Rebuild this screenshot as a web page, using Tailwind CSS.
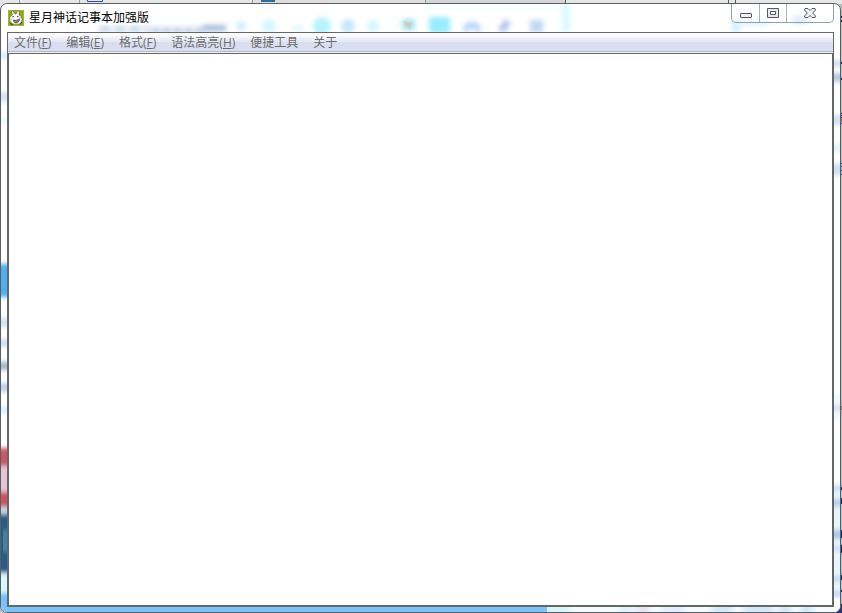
<!DOCTYPE html>
<html lang="zh-CN">
<head>
    <meta charset="UTF-8">
    <meta name="viewport" content="width=device-width, initial-scale=1.0">
    <title>星月神话记事本加强版</title>
    <script src="https://cdn.jsdelivr.net/npm/@tailwindcss/browser@4"></script>
</head>
<body class="relative h-screen overflow-hidden bg-[#c4c4c4] pt-[3px] pr-px font-['Open_Sans','Noto_Sans_CJK_SC',sans-serif] text-[12px] leading-4">

    <!-- desktop behind the window -->
    <svg class="absolute inset-x-0 top-0 h-3 w-full" aria-hidden="true">
        <rect width="100%" height="12" fill="#e6e6e6"/>
        <rect x="254" width="171" height="12" fill="#dedede"/>
        <rect x="425" width="140" height="12" fill="#d5d5d5"/>
        <path d="M19.5 0v3M79.5 0v3M252.500 0v3M425.500 0v3" stroke="#999"/>
        <path d="M565.500 0v3M728.500 0v3M735.500 0v3" stroke="#555"/>
        <path d="M87.500 0v1.500h15V0" fill="none" stroke="#2f4f94"/>
        <rect x="261" width="14" height="2" fill="#2c7297"/>
    </svg>
    <svg class="absolute inset-y-0 right-0 h-full w-2" aria-hidden="true">
        <rect y="4" width="8" height="100%" fill="#bdbdbd"/>
        <path d="M7.500 16v2M7.500 20v2M7.500 62v2M7.500 78v2M7.500 113v1M7.500 115v1M7.500 117v1M7.500 123v1M7.500 163v1M7.500 166v1M7.500 170v1M7.500 174v1M7.500 487v3M7.500 498v6M7.500 530v8M7.500 545v8M7.500 575v5M7.500 590v2M7.500 604v9" stroke="#20206a"/>
        <path d="M7.500 118v4M7.500 406v4" stroke="#a8763c"/>
        <path d="M0 613l8-8v8z" fill="#303078"/>
    </svg>

    <div class="relative flex h-full flex-col overflow-hidden rounded-[7px] border border-[#5c5f60] bg-white px-[6px] pb-[5px]">

        <!-- blurred glass: title strip -->
        <svg class="absolute inset-x-0 top-0 h-7 w-full" aria-hidden="true">
            <defs>
                <filter id="soft" x="-20" y="-20" width="900" height="80" filterUnits="userSpaceOnUse"><feGaussianBlur stdDeviation="2.500"/></filter>
            </defs>
            <g filter="url(#soft)">
                <path d="M98 25h50" stroke="#bfd2e8" stroke-width="5" stroke-dasharray="12 3"/>
                <path d="M150 26h52" stroke="#b6cae4" stroke-width="5" stroke-dasharray="9 2"/>
                <path d="M202 24h23" stroke="#a3bad9" stroke-width="6"/>
                <rect x="425" y="3" width="143" height="2" fill="#ecfcff"/>
                <rect x="561" y="0" width="8" height="28" fill="#dcf9ff"/>
                <circle cx="240" cy="22" r="5" fill="#d3effc"/>
                <circle cx="268" cy="22" r="7" fill="#d4f7ff"/>
                <ellipse cx="297" cy="24" rx="7" ry="3" fill="#def8ff"/>
                <circle cx="321" cy="22" r="9" fill="#b3f5ff"/>
                <circle cx="347" cy="22" r="7" fill="#c5e7fb"/>
                <circle cx="372" cy="22" r="6" fill="#d6f4ff"/>
                <rect x="401" y="15" width="13" height="11" fill="#a8e5f2"/>
                <rect x="428" y="13" width="21" height="16" rx="3" fill="#97edff"/>
                <path d="M465 27a6 6 0 0 1 12 0" fill="none" stroke="#b9d6fa" stroke-width="7"/>
                <path d="M500 27l7-10" stroke="#b0c2ee" stroke-width="7"/>
                <rect x="529" y="16" width="13" height="12" fill="#bfd8f6"/>
                <rect x="731" y="16" width="8" height="12" fill="#d1efff"/>
                <ellipse cx="799" cy="16" rx="9" ry="4" fill="#cfe0f2"/>
                <ellipse cx="752" cy="18" rx="18" ry="4" fill="#e3f3ff"/>
            </g>
            <path d="M402 17l9 2-2 7z" fill="#e6b9a6" opacity=".6"/>
            <path d="M403 19l4 1-2 3z" fill="#b5dca0" opacity=".6"/>
        </svg>

        <!-- left, right and bottom edges -->
        <svg class="absolute inset-y-0 left-0 h-full w-[7px]" aria-hidden="true">
            <defs>
                <filter id="edge" x="-5" y="-8" width="20" height="660" filterUnits="userSpaceOnUse"><feGaussianBlur stdDeviation="0 2"/></filter>
            </defs>
            <g filter="url(#edge)">
                <rect y="48" width="7" height="7" fill="#d9f0fb"/>
                <rect y="88" width="7" height="10" fill="#d6e3f5"/>
                <rect y="116" width="7" height="3" fill="#d9f5ff"/>
                <rect y="260" width="7" height="33" fill="#51adef"/>
                <rect y="314" width="7" height="9" fill="#d3e2f7"/>
                <rect y="335" width="7" height="8" fill="#cfdff5"/>
                <rect y="358" width="7" height="8" fill="#a6b4c9"/>
                <rect y="379" width="7" height="9" fill="#bfd0e9"/>
                <rect y="403" width="7" height="6" fill="#d6efff"/>
                <rect y="444" width="7" height="18" fill="#cb5768"/>
                <rect y="462" width="7" height="26" fill="#e5c4d6"/>
                <rect y="488" width="7" height="15" fill="#cb5264"/>
                <rect y="503" width="7" height="7" fill="#c8d8e8"/>
                <rect y="510" width="7" height="59" fill="#285d8a"/>
                <rect y="526" x="2" width="5" height="22" fill="#4280a6"/>
                <rect y="569" width="7" height="20" fill="#d8f8ff"/>
                <rect y="589" width="7" height="30" fill="#74c2fc"/>
            </g>
        </svg>
        <svg class="absolute inset-y-0 right-0 h-full w-[7px]" aria-hidden="true">
            <g filter="url(#edge)">
                <rect y="56" width="7" height="7" fill="#cfe2f3"/>
                <rect y="69" width="7" height="9" fill="#b4cbe5"/>
                <rect y="111" width="7" height="10" fill="#cde4fa"/>
                <rect y="140" width="7" height="8" fill="#def5ff"/>
                <rect y="160" width="7" height="11" fill="#c9e0fb"/>
                <rect y="390" width="7" height="26" fill="#f0faff"/>
                <rect y="401" width="7" height="6" fill="#cde3f7"/>
                <rect y="480" width="7" height="110" fill="#e6f6ff"/>
                <rect y="482" width="7" height="5" fill="#bfdcf8"/>
                <rect y="495" width="7" height="8" fill="#b3d2f2"/>
                <rect y="526" width="7" height="9" fill="#a2c9ee"/>
                <rect y="542" width="7" height="5" fill="#c4def8"/>
                <rect y="572" width="7" height="6" fill="#bfdcf8"/>
                <rect y="587" width="7" height="6" fill="#bfdcf8"/>
            </g>
        </svg>
        <svg class="absolute inset-x-0 bottom-0 h-[6px] w-full" aria-hidden="true">
            <defs>
                <filter id="base" x="-10" y="-2" width="1000" height="12" filterUnits="userSpaceOnUse"><feGaussianBlur stdDeviation="3 0"/></filter>
            </defs>
            <rect width="100%" height="6" fill="#f3fbff"/>
            <g filter="url(#base)">
                <rect x="540" width="28" height="6" fill="#d7f4ff"/>
                <rect x="618" width="14" height="6" fill="#e0f0ff"/>
                <rect x="636" width="12" height="6" fill="#e7e3f5"/>
                <rect x="660" width="24" height="6" fill="#e0efff"/>
                <rect x="711" width="20" height="6" fill="#d2e9fc"/>
                <rect x="742" width="30" height="6" fill="#d2e9fc"/>
                <rect x="778" width="12" height="6" fill="#d2e9fc"/>
                <rect x="800" width="12" height="6" fill="#d2e9fc"/>
            </g>
            <rect width="546" height="6" fill="#79c4ff"/>
        </svg>

        <header class="relative flex h-7 shrink-0 items-start justify-between">
            <div class="flex items-center gap-[5px] pt-[6px] pl-px">
                <svg class="size-4" viewBox="0 0 16 16" aria-hidden="true">
                    <rect width="16" height="16" fill="#8fa51d"/>
                    <path d="M.5.500h15v15H.5z" fill="none" stroke="#a3b62b"/>
                    <path d="M4.500 5L3.500 1.500 5 .8 7 4h1L9.500.8l2 .7L11 5c2 1 3 2.500 3 4.500 0 3-2 5-5.500 5S2 12.500 1.700 10 2.500 6 4.500 5z" fill="#fff" stroke="#5d6536" stroke-width=".6"/>
                    <path d="M5 2l.8 2M10.400 2l-.6 2" stroke="#c9c4c4" stroke-width=".8"/>
                    <path d="M4.500 6.700h1.500M9 6.700h1.500" stroke="#302c2c"/>
                    <path d="M5.500 10c2 .8 4.500.3 6-1.300 0 2.500-1.200 4.300-3.300 4.300-1.500 0-2.700-1.300-2.700-3z" fill="#8f8084" stroke="#393636" stroke-width=".7"/>
                    <circle cx="3.800" cy="9.500" r="1" fill="#e8bcbc"/>
                    <circle cx="12.300" cy="7.800" r=".8" fill="#e8bcbc"/>
                    <path d="M2 13.500l3 1.500M14 12l-2 2.500" stroke="#353d18"/>
                </svg>
                <h1 class="text-black">星月神话记事本加强版</h1>
            </div>
            <div class="flex h-[19px] overflow-hidden rounded-b-[5px] border border-t-0 border-[#929fae] bg-white/40">
                <button class="flex w-7 items-center justify-center border-r border-[#a8b3bf]" aria-label="最小化">
                    <svg class="h-[13px] w-[14px]" viewBox="0 0 14 13" aria-hidden="true"><rect x="1.500" y="6.500" width="11" height="4" rx=".5" fill="#f1f1f1" stroke="#535666"/></svg>
                </button>
                <button class="flex w-[27px] items-center justify-center border-r border-[#a8b3bf]" aria-label="最大化">
                    <svg class="h-[13px] w-[14px]" viewBox="0 0 14 13" aria-hidden="true"><path d="M1.500 1.500h11v9h-11zM4.500 4.500v3h5v-3z" fill="#e9e9ec" fill-rule="evenodd" stroke="#535666" stroke-linejoin="round"/></svg>
                </button>
                <button class="flex w-[46px] items-center justify-center" aria-label="关闭">
                    <svg class="h-[13px] w-[14px]" viewBox="0 0 14 13" aria-hidden="true"><path d="M2 1.500h3l2 2 2-2h3l.5 1.500L9.700 6l2.800 3-.5 1.500H9l-2-2-2 2H2L1.500 9l2.800-3-2.800-3z" fill="#f1f1f1" stroke="#535666" stroke-linejoin="round"/></svg>
                </button>
            </div>
        </header>

        <nav class="relative flex h-[21px] shrink-0 items-center gap-[15px] border border-b-0 border-[#686868] bg-linear-to-b from-[#fcfcff] from-10% via-[#e8ebf5] via-35% to-[#dfe4f4] pl-[6px] text-[#6d6d6d] shadow-[inset_0_-1px_#f3f3f3,inset_0_-2px_#b4b7c5,inset_0_-11px_#d9def0]">
            <button>文件(<u>F</u>)</button>
            <button>编辑(<u>E</u>)</button>
            <button>格式(<u>F</u>)</button>
            <button>语法高亮(<u>H</u>)</button>
            <button>便捷工具</button>
            <button>关于</button>
        </nav>

        <textarea class="relative block min-h-0 w-full flex-1 resize-none border-2 border-t border-[#646864] bg-white p-1 outline-none" aria-label="文本内容"></textarea>
    </div>
</body>
</html>
